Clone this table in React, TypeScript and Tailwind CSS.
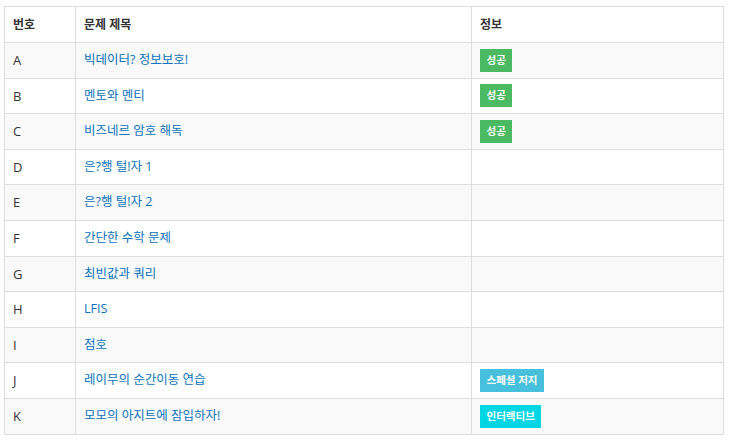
import React from "react";

type Problem = {
  id: string;
  title: string;
  badge?: { text: string; className: string };
};

const problems: Problem[] = [
  { id: "A", title: "빅데이터? 정보보호!", badge: { text: "성공", className: "bg-[#4cb963]" } },
  { id: "B", title: "멘토와 멘티", badge: { text: "성공", className: "bg-[#4cb963]" } },
  { id: "C", title: "비즈네르 암호 해독", badge: { text: "성공", className: "bg-[#4cb963]" } },
  { id: "D", title: "은?행 털!자 1" },
  { id: "E", title: "은?행 털!자 2" },
  { id: "F", title: "간단한 수학 문제" },
  { id: "G", title: "최빈값과 쿼리" },
  { id: "H", title: "LFIS" },
  { id: "I", title: "점호" },
  { id: "J", title: "레이무의 순간이동 연습", badge: { text: "스페셜 저지", className: "bg-[#46c0dc]" } },
  { id: "K", title: "모모의 아지트에 잠입하자!", badge: { text: "인터랙티브", className: "bg-[#00d6e3]" } },
];

function App() {
  return (
    <div
      className="min-h-[440px] bg-white pl-[4px] pt-[6px] text-[#333]"
      style={{ fontFamily: '"Open Sans", "Noto Sans CJK KR", sans-serif' }}
    >
      <table className="w-[720px] table-fixed border-collapse text-[12px]">
        <thead>
          <tr>
            <th className="w-[71px] border border-[#dddddd] px-2 py-2 text-left font-bold leading-[19px]">번호</th>
            <th className="w-[396px] border border-[#dddddd] px-2 py-2 text-left font-bold leading-[19px]">문제 제목</th>
            <th className="border border-[#dddddd] px-2 py-2 text-left font-bold leading-[19px]">정보</th>
          </tr>
        </thead>
        <tbody>
          {problems.map((p, i) => (
            <tr key={p.id} className={i % 2 === 0 ? "bg-[#f9f9f9]" : "bg-white"}>
              <td className="border border-[#dddddd] px-2 py-2 text-[13px] leading-[18.6px]">{p.id}</td>
              <td className="border border-[#dddddd] px-2 py-2 text-[12.5px] leading-[18.6px]">
                <a className="text-[#0b72b9]">{p.title}</a>
              </td>
              <td className="border border-[#dddddd] px-2 py-2 leading-[18.6px]">
                <div className="flex h-[18.6px] items-center">
                  {p.badge && (
                    <span
                      className={`inline-block h-[23px] shrink-0 px-[6.5px] text-[10.5px] font-bold leading-[23px] text-white ${p.badge.className}`}
                    >
                      {p.badge.text}
                    </span>
                  )}
                </div>
              </td>
            </tr>
          ))}
        </tbody>
      </table>
    </div>
  );
}

export default App;
